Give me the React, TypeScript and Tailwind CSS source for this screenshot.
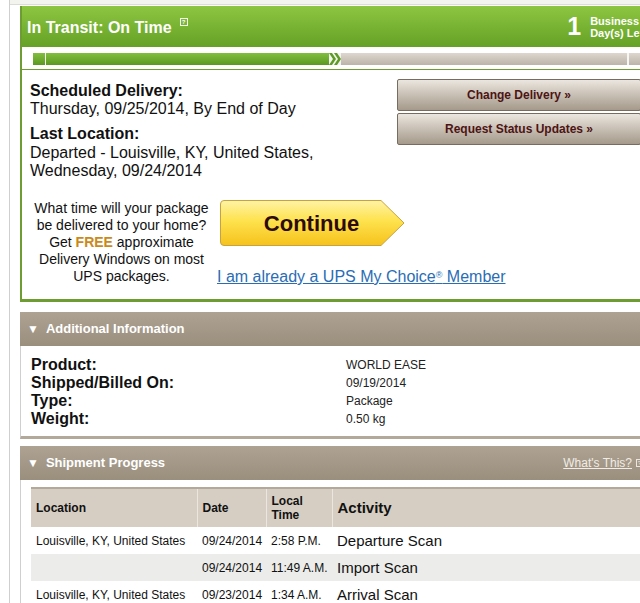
import React from 'react';

const rows = [
  { loc: 'Louisville, KY, United States', date: '09/24/2014', time: '2:58 P.M.', act: 'Departure Scan' },
  { loc: '', date: '09/24/2014', time: '11:49 A.M.', act: 'Import Scan' },
  { loc: 'Louisville, KY, United States', date: '09/23/2014', time: '1:34 A.M.', act: 'Arrival Scan' },
];

function HelpIcon({ light = true }: { light?: boolean }) {
  return (
    <span
      className={
        light
          ? 'flex w-[8px] h-[8px] border border-white/90 text-[6px] leading-none items-center justify-center text-white mb-[12px]'
          : 'flex w-[7px] h-[8px] border border-[#ece6dd] text-[6px] leading-none items-center justify-center text-[#ece6dd]'
      }
    >
      ?
    </span>
  );
}

function Chevrons() {
  return (
    <svg width="12" height="12" viewBox="0 0 12 12" className="block">
      <rect width="12" height="12" fill="#f3f3f0" />
      <path d="M0 0 L3 0 L7 6 L3 12 L0 12 L4 6 Z" fill="#5e9b22" />
      <path d="M5 0 L8 0 L12 6 L8 12 L5 12 L9 6 Z" fill="#5e9b22" />
    </svg>
  );
}

function ContinueButton() {
  return (
    <button className="relative w-[185px] h-[46px] flex items-center justify-center pr-[2px]">
      <svg width="185" height="46" viewBox="0 0 185 46" className="absolute inset-0">
        <defs>
          <linearGradient id="cg" x1="0" y1="0" x2="0" y2="1">
            <stop offset="0" stopColor="#fff3a6" />
            <stop offset="0.45" stopColor="#fee24d" />
            <stop offset="1" stopColor="#f6c21c" />
          </linearGradient>
        </defs>
        <path
          d="M4 0.5 H161 L184 23 L161 45.5 H4 Q0.5 45.5 0.5 42 V4 Q0.5 0.5 4 0.5 Z"
          fill="url(#cg)"
          stroke="#c7a33e"
        />
      </svg>
      <span className="relative text-[22px] font-bold text-[#2d0b0b]">Continue</span>
    </button>
  );
}

function SectionHeader({ title, right }: { title: string; right?: React.ReactNode }) {
  return (
    <div className="h-[34px] bg-gradient-to-b from-[#aea393] to-[#9a8e7d] flex items-center justify-between pl-[7px] pr-[26px]">
      <div className="flex items-center gap-[7px] text-white font-bold text-[13px]">
        <span className="text-[12px]">▼</span>
        <span>{title}</span>
      </div>
      {right}
    </div>
  );
}

export default function App() {
  return (
    <div className="w-[640px] h-[603px] overflow-hidden bg-white font-['Liberation_Sans',Arial,sans-serif] text-[#111]">
      <div className="ml-[9px] border-l border-[#cfcfcf] w-[660px] min-h-[603px]">
        <div className="h-[5px] border-b border-[#dcdcd4] bg-[#f4f4ef]" />
        <div className="pl-[10px] pt-[1px]">
          {/* Status panel */}
          <section className="border-l-2 border-[#6d9c31]">
            <div className="h-[41px] bg-gradient-to-b from-[#8dc640] to-[#65a126] flex items-center justify-between pl-[5px] pr-[22px]">
              <div className="flex items-center gap-[8px] text-white font-bold text-[16px] pt-[3px]">
                <span>In Transit: On Time</span>
                <HelpIcon />
              </div>
              <div className="flex items-center gap-[9px] text-white font-bold">
                <span className="text-[25px] leading-none">1</span>
                <span className="text-[11px] leading-[12px] whitespace-nowrap">Business<br />Day(s) Left</span>
              </div>
            </div>

            <div className="h-[23px] bg-white border-b border-[#6d9c31] pl-[11px] pt-[6px]">
              <div className="flex h-[12px]">
                <div className="w-[12px] bg-gradient-to-b from-[#82bf40] to-[#5b981f]" />
                <div className="w-[1px] bg-[#f3f3f0]" />
                <div className="w-[283px] bg-gradient-to-b from-[#82bf40] to-[#5b981f]" />
                <Chevrons />
                <div className="w-[286px] bg-gradient-to-b from-[#ddd7cf] to-[#bcb4a9]" />
                <div className="w-[2px] bg-[#f6f6f3]" />
                <div className="flex-1 bg-gradient-to-b from-[#ddd7cf] to-[#bcb4a9]" />
              </div>
            </div>

            <div className="h-[232px] bg-white border-b-[3px] border-[#6d9c31] pl-[8px] pt-[9px]">
              <div className="flex">
                <div className="w-[367px] pt-[3px] text-[16px]">
                  <div className="font-bold leading-[18px]">Scheduled Delivery:</div>
                  <div className="leading-[18px]">Thursday, 09/25/2014, By End of Day</div>
                  <div className="font-bold leading-[18px] mt-[7px]">Last Location:</div>
                  <div className="leading-[18px] mt-[1px]">Departed - Louisville, KY, United States,</div>
                  <div className="leading-[18px]">Wednesday, 09/24/2014</div>
                </div>
                <div className="flex flex-col gap-[2px]">
                  <button className="w-[244px] h-[32px] border border-[#776c5f] rounded-[2px] bg-gradient-to-b from-[#ebe6df] to-[#a59a8b] text-[12px] font-bold text-[#4d1414]">
                    Change Delivery »
                  </button>
                  <button className="w-[244px] h-[32px] border border-[#776c5f] rounded-[2px] bg-gradient-to-b from-[#ebe6df] to-[#a59a8b] text-[12px] font-bold text-[#4d1414]">
                    Request Status Updates »
                  </button>
                </div>
              </div>

              <div className="flex mt-[20px]">
                <div className="w-[183px] text-center text-[14px] leading-[17px]">
                  What time will your package be delivered to your home? Get{' '}
                  <span className="font-bold text-[#c98a1d]">FREE</span> approximate Delivery Windows on most UPS
                  packages.
                </div>
                <div className="ml-[4px] flex flex-col">
                  <div className="ml-[3px]">
                    <ContinueButton />
                  </div>
                  <a className="mt-auto text-[16px] leading-[17px] text-[#2a6db5] underline">
                    I am already a UPS My Choice<sup className="text-[9px]">®</sup> Member
                  </a>
                </div>
              </div>
            </div>
          </section>

          {/* Additional Information */}
          <section className="mt-[10px]">
            <SectionHeader title="Additional Information" />
            <div className="border-l border-[#cfcfcf] border-b-[3px] border-b-[#b3a99b] pl-[10px] pt-[10px] pb-[8px]">
              <div className="grid grid-cols-[315px_1fr] items-center">
                {[
                  ['Product:', 'WORLD EASE'],
                  ['Shipped/Billed On:', '09/19/2014'],
                  ['Type:', 'Package'],
                  ['Weight:', '0.50 kg'],
                ].map(([k, v]) => (
                  <React.Fragment key={k}>
                    <div className="text-[16px] font-bold leading-[18px]">{k}</div>
                    <div className="text-[12px] leading-[18px] text-[#222]">{v}</div>
                  </React.Fragment>
                ))}
              </div>
            </div>
          </section>

          {/* Shipment Progress */}
          <section className="mt-[7px]">
            <SectionHeader
              title="Shipment Progress"
              right={
                <div className="flex items-center gap-[4px]">
                  <a className="text-[12px] text-[#f1ece5] underline">What's This?</a>
                  <HelpIcon light={false} />
                </div>
              }
            />
            <div className="border-l border-[#cfcfcf] pl-[10px] pt-[7px]">
              <table className="w-full border-collapse table-fixed">
                <colgroup>
                  <col className="w-[166px]" />
                  <col className="w-[69px]" />
                  <col className="w-[66px]" />
                  <col />
                </colgroup>
                <thead>
                  <tr className="h-[39px] bg-[#d6cec2] border-t-2 border-[#b3a99a] text-left">
                    <th className="pl-[5px] text-[12px] font-bold">Location</th>
                    <th className="pl-[5px] text-[12px] font-bold border-l border-[#ebe6df]">Date</th>
                    <th className="pl-[5px] text-[12px] font-bold leading-[14px] border-l border-[#ebe6df]">
                      Local<br />Time
                    </th>
                    <th className="pl-[5px] text-[15px] font-bold border-l border-[#ebe6df]">Activity</th>
                  </tr>
                </thead>
                <tbody>
                  {rows.map((r, i) => (
                    <tr key={i} className={i % 2 === 1 ? 'h-[27px] bg-[#ececea]' : 'h-[27px] bg-white'}>
                      <td className="pl-[5px] text-[12px]">{r.loc}</td>
                      <td className="pl-[5px] text-[12px]">{r.date}</td>
                      <td className="pl-[5px] text-[12px] whitespace-nowrap">{r.time}</td>
                      <td className="pl-[5px] text-[15px] pt-[2px]">{r.act}</td>
                    </tr>
                  ))}
                </tbody>
              </table>
            </div>
          </section>
        </div>
      </div>
    </div>
  );
}
